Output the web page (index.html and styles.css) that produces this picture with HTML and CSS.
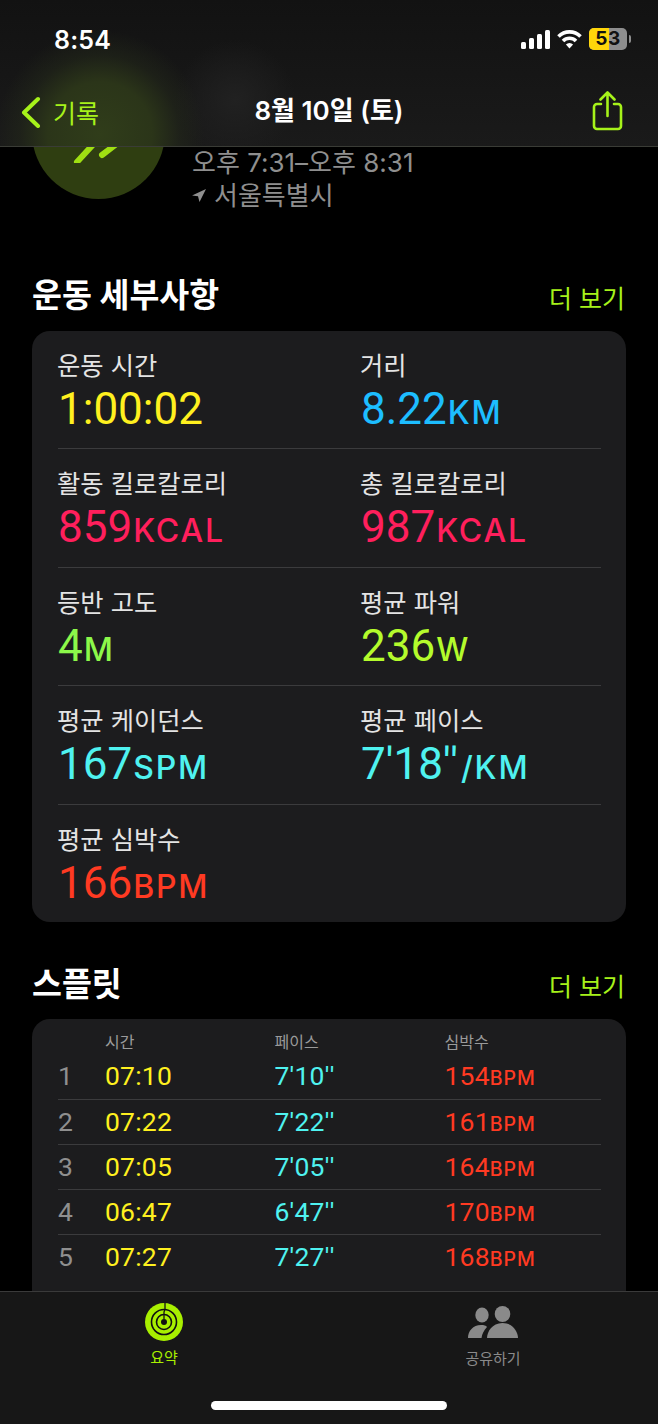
FILE: index.html
```html
<!DOCTYPE html>
<html lang="ko">
<head>
<meta charset="utf-8">
<title>8월 10일 (토)</title>
<link rel="stylesheet" href="styles.css">
</head>
<body>
<div class="screen">
  <header class="top">
    <div class="status">
      <span class="clock">8:54</span>
      <div class="status-icons">
        <svg class="signal" width="29" height="19" viewBox="0 0 29 19"><rect x="0" y="12" width="5" height="7" rx="1.500"/><rect x="8" y="8" width="5" height="11" rx="1.500"/><rect x="16" y="4" width="5" height="15" rx="1.500"/><rect x="24" y="0" width="5" height="19" rx="1.500"/></svg>
        <svg class="wifi" width="25" height="20" viewBox="0 0 25 20"><path d="M1.500 7.500a15.500 15.500 0 0 1 22 0"/><path d="M6 12a9.200 9.200 0 0 1 13 0"/><path class="dot" d="M12.500 19.500l-3.600-4a5 5 0 0 1 7.200 0z"/></svg>
        <div class="battery"><div class="battery-body"><span class="fill"></span><span class="num">53</span></div><span class="cap"></span></div>
      </div>
    </div>
    <nav class="nav">
      <div class="back">
        <svg width="22" height="32" viewBox="0 0 22 32"><path d="M18 3L4 16.500L18 30"/></svg>
        <span>기록</span>
      </div>
      <div class="nav-title">8월 10일 (토)</div>
      <svg class="share" width="32" height="40" viewBox="0 0 32 40"><path d="M9 13H5a3 3 0 0 0-3 3V35a3 3 0 0 0 3 3h21a3 3 0 0 0 3-3V16a3 3 0 0 0-3-3h-4"/><path d="M15.500 25V2M8.500 8.500l7-7 7 7"/></svg>
    </nav>
  </header>

  <main class="content">
    <section class="summary">
      <div class="badge">
        <svg width="60" height="60" viewBox="0 0 60 60"><path d="M8 59L32 33M33 52L50 39"/></svg>
      </div>
      <div class="summary-text">
        <div>오후 7:31–오후 8:31</div>
        <div class="place"><svg width="14" height="13" viewBox="0 0 14 13"><path d="M14 0L0 6.500l6 .8 1.500 5.700z"/></svg><span>서울특별시</span></div>
      </div>
    </section>

    <div class="section-head first">
      <h2>운동 세부사항</h2><span class="more">더 보기</span>
    </div>
    <section class="card details">
      <div class="row">
        <div class="metric"><div class="label">운동 시간</div><div class="value yellow">1:00:02</div></div>
        <div class="metric"><div class="label">거리</div><div class="value blue">8.22<small>KM</small></div></div>
      </div>
      <div class="row">
        <div class="metric"><div class="label">활동 킬로칼로리</div><div class="value pink">859<small>KCAL</small></div></div>
        <div class="metric"><div class="label">총 킬로칼로리</div><div class="value pink">987<small>KCAL</small></div></div>
      </div>
      <div class="row">
        <div class="metric"><div class="label">등반 고도</div><div class="value green">4<small>M</small></div></div>
        <div class="metric"><div class="label">평균 파워</div><div class="value lime">236<small>W</small></div></div>
      </div>
      <div class="row">
        <div class="metric"><div class="label">평균 케이던스</div><div class="value cyan">167<small>SPM</small></div></div>
        <div class="metric"><div class="label">평균 페이스</div><div class="value cyan">7'18<span class="q">''</span><small>/KM</small></div></div>
      </div>
      <div class="row">
        <div class="metric"><div class="label">평균 심박수</div><div class="value red">166<small>BPM</small></div></div>
      </div>
    </section>

    <div class="section-head second">
      <h2>스플릿</h2><span class="more">더 보기</span>
    </div>
    <section class="card splits">
      <div class="split-head"><span></span><span>시간</span><span>페이스</span><span>심박수</span></div>
      <div class="split"><span class="idx">1</span><span class="yellow">07:10</span><span class="cyan">7'10<span class="q">''</span></span><span class="red">154<small>BPM</small></span></div>
      <div class="split"><span class="idx">2</span><span class="yellow">07:22</span><span class="cyan">7'22<span class="q">''</span></span><span class="red">161<small>BPM</small></span></div>
      <div class="split"><span class="idx">3</span><span class="yellow">07:05</span><span class="cyan">7'05<span class="q">''</span></span><span class="red">164<small>BPM</small></span></div>
      <div class="split"><span class="idx">4</span><span class="yellow">06:47</span><span class="cyan">6'47<span class="q">''</span></span><span class="red">170<small>BPM</small></span></div>
      <div class="split"><span class="idx">5</span><span class="yellow">07:27</span><span class="cyan">7'27<span class="q">''</span></span><span class="red">168<small>BPM</small></span></div>
    </section>
  </main>

  <footer class="tabbar">
    <div class="tabs">
      <div class="tab active">
        <svg width="38" height="38" viewBox="0 0 38 38"><circle cx="19" cy="19" r="19" fill="#a8f000"/><circle cx="19" cy="19" r="12.500" fill="none" stroke="#111" stroke-width="1.600"/><circle cx="19" cy="19" r="7.500" fill="none" stroke="#111" stroke-width="1.600"/><circle cx="19" cy="19" r="3" fill="#111"/><path d="M20 0v6l-1 3v7" fill="none" stroke="#111" stroke-width="1.300"/></svg>
        <span>요약</span>
      </div>
      <div class="tab">
        <svg width="50" height="33" viewBox="0 0 50 33"><ellipse cx="14" cy="9" rx="6.700" ry="7.500"/><ellipse cx="34.500" cy="8" rx="7.800" ry="8"/><path d="M0 32c0-7 5-13 13-13 3 0 5 .5 6 2-3 3-5 7-5.500 11z"/><path d="M19 32c0-6 5-15 15.500-15S50 26 50 32z"/></svg>
        <span>공유하기</span>
      </div>
    </div>
    <div class="home-bar"></div>
  </footer>
</div>
</body>
</html>
```

FILE: styles.css
```css
* { box-sizing: border-box; }
html, body { margin: 0; padding: 0; background: #000; }
body { font-family: "Inter", "Noto Sans CJK KR", sans-serif; color: #fff; }

.screen {
  width: 658px;
  height: 1424px;
  display: flex;
  flex-direction: column;
  overflow: hidden;
  background: #000;
}

/* top */
.top {
  flex: 0 0 147px;
  position: relative;
  z-index: 2;
  background:
    radial-gradient(circle 104px at 100px 134px, #303d1a 0%, #2b3519 50%, rgba(36,42,26,0.5) 76%, rgba(30,34,24,0) 100%),
    radial-gradient(circle 60px at 235px 100px, #212121 0%, rgba(33,33,33,0) 100%),
    linear-gradient(#121212, #1a1a1a);
  border-bottom: 1px solid #3a3c36;
}
.status {
  height: 78px;
  padding: 22px 27px 0 54px;
  display: flex;
  justify-content: space-between;
  align-items: flex-start;
}
.clock { font-size: 25px; font-weight: 600; line-height: 36px; letter-spacing: 0.2px; }
.status-icons { display: flex; align-items: center; gap: 7px; height: 36px; margin-top: -1px; }
.signal { fill: #fff; }
.wifi path { fill: none; stroke: #fff; stroke-width: 3.600; }
.wifi path.dot { fill: #fff; stroke: none; }
.battery { display: flex; align-items: center; gap: 2px; }
.battery-body {
  position: relative;
  width: 38px;
  height: 22px;
  border-radius: 5px;
  background: #8e8e8e;
  overflow: hidden;
  display: flex;
  align-items: center;
  justify-content: center;
}
.fill { position: absolute; left: 0; top: 0; bottom: 0; width: 53%; background: #ffd60a; }
.num { position: relative; font-size: 19px; font-weight: 700; color: #111; line-height: 22px; letter-spacing: 0.5px; }
.cap { width: 2px; height: 8px; border-radius: 0 2px 2px 0; background: #8e8e8e; }

.nav {
  height: 68px;
  position: relative;
  display: flex;
  align-items: center;
  justify-content: space-between;
  padding: 0 34px 0 20px;
}
.back { display: flex; align-items: center; gap: 11px; color: #a6f21a; font-size: 25px; }
.back path { fill: none; stroke: #a6f21a; stroke-width: 4; stroke-linecap: round; stroke-linejoin: round; }
.nav-title {
  position: absolute;
  left: 0;
  right: 0;
  top: 13px;
  text-align: center;
  font-size: 26px;
  font-weight: 600;
  line-height: 40px;
}
.share { margin-top: -2px; }
.share path { fill: none; stroke: #a6f21a; stroke-width: 2.600; stroke-linecap: round; stroke-linejoin: round; }

/* content */
.content { flex: 1; min-height: 0; overflow: hidden; padding: 0 32px; }
.summary { display: flex; margin-top: -81px; height: 133px; gap: 27px; }
.badge {
  flex: 0 0 133px;
  height: 133px;
  border-radius: 50%;
  background: #2f3e11;
  display: flex;
  align-items: center;
  justify-content: center;
}
.badge path { fill: none; stroke: #9fdf12; stroke-width: 6; stroke-linecap: round; }
.summary-text { padding-top: 80px; font-size: 26px; line-height: 33px; color: #8f8f8f; }
.place { display: flex; align-items: center; gap: 8px; }
.place svg { fill: #8f8f8f; }

.section-head { display: flex; justify-content: space-between; align-items: center; height: 40px; }
.section-head.first { margin-top: 76px; margin-bottom: 16px; }
.section-head.second { margin-top: 42px; margin-bottom: 15px; }
.section-head h2 { margin: 0; padding-top: 2px; font-size: 32.500px; font-weight: 700; line-height: 40px; }
.more { font-size: 25px; color: #a6f21a; margin-right: 1px; padding-top: 3px; }
.second .more { padding-top: 1px; }

.card { background: #1c1c1e; border-radius: 18px; padding: 0 25px 0 26px; }
.details { height: 591px; }
.row { height: 118.500px; display: flex; border-top: 1px solid #3b3b3d; padding-top: 16px; }
.row:first-child { height: 117px; border-top: 0; padding-top: 16px; }
.metric { flex: 0 0 303px; }
.label { font-size: 25.300px; line-height: 38px; color: #e4e4e4; margin-left: -1px; }
.value { font-family: "Roboto", sans-serif; font-size: 44px; font-weight: 400; line-height: 48px; white-space: nowrap; }
.value small { font-family: "Inter", sans-serif; font-size: 32px; font-weight: 500; letter-spacing: 1.800px; margin-left: 1px; }
.q { letter-spacing: 2px; }

.yellow { color: #fff01f; }
.blue { color: #1dbdff; }
.pink { color: #ff1f5c; }
.green { color: #8cf84a; }
.lime { color: #b4fb2c; }
.cyan { color: #4ff2f0; }
.red { color: #ff3a22; }

.splits { height: 300px; padding-top: 12px; }
.split-head, .split {
  display: grid;
  grid-template-columns: 47px 169.500px 170px 1fr;
}
.split-head { font-size: 16px; line-height: 22px; color: #9a9a9a; height: 24px; }
.split { font-family: "Roboto", sans-serif; height: 45px; font-size: 26.500px; font-weight: 400; line-height: 43px; border-bottom: 1px solid #3b3b3d; letter-spacing: 0.2px; }
.split:nth-child(2) { line-height: 41px; }
.split:last-child { border-bottom: 0; }
.split small { font-family: "Inter", sans-serif; font-size: 19.500px; font-weight: 500; letter-spacing: 1px; }
.idx { color: #8f8f8f; }

/* bottom */
.tabbar {
  flex: 0 0 133px;
  position: relative;
  z-index: 2;
  background: #171717;
  border-top: 1px solid #3a3a3a;
}
.tabs { display: flex; }
.tab {
  flex: 0 0 auto;
  display: flex;
  flex-direction: column;
  align-items: center;
  color: #8a8a8a;
  font-size: 15px;
  line-height: 22px;
  gap: 6px;
  padding-top: 11px;
}
.tab:first-child { width: 130px; margin-left: 99px; }
.tab:last-child { width: 130px; margin-left: 199px; padding-top: 14px; gap: 9px; }
.tab:last-child svg { fill: #8a8a8a; }
.tab.active { color: #a8f000; }
.home-bar {
  width: 236px;
  height: 9px;
  border-radius: 5px;
  background: #fff;
  margin: 31px auto 0 211px;
}
```
